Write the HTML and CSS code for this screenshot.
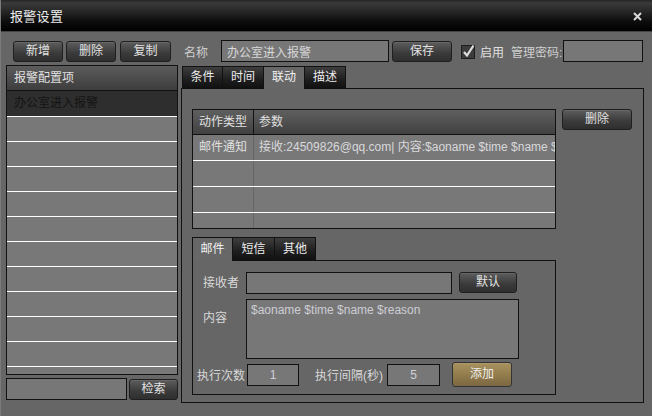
FILE: index.html
```html
<!DOCTYPE html>
<html lang="zh">
<head>
<meta charset="utf-8">
<title>报警设置</title>
<link rel="stylesheet" href="styles.css">
</head>
<body>
<div class="window">
  <div class="titlebar">
    <span class="title">报警设置</span>
    <svg class="close" width="9" height="9" viewBox="0 0 9 9"><path d="M1 1L8 8M8 1L1 8" stroke="#d8d8d8" stroke-width="2"/></svg>
  </div>
  <div class="toolbar">
    <button class="btn w50">新增</button>
    <button class="btn w50 g3">删除</button>
    <button class="btn w51 g4">复制</button>
    <span class="lbl name-lbl">名称</span>
    <input class="field name-field" value="办公室进入报警">
    <button class="btn save">保存</button>
    <span class="check"><svg width="15" height="15" viewBox="0 0 15 15"><rect x="0.5" y="1.5" width="13" height="13" fill="#3c3c3c" stroke="#1c1c1c"/><path d="M3 8L6 11.5L12.5 1.5" fill="none" stroke="#e0e0e0" stroke-width="2.2"/></svg></span>
    <span class="lbl enable">启用</span>
    <span class="lbl pwd-lbl">管理密码:</span>
    <input class="field pwd-field" value="">
  </div>
  <div class="main">
    <div class="left">
      <div class="list">
        <div class="list-head">报警配置项</div>
        <div class="list-row selected">办公室进入报警</div>
        <div class="list-row"></div>
        <div class="list-row"></div>
        <div class="list-row"></div>
        <div class="list-row"></div>
        <div class="list-row"></div>
        <div class="list-row"></div>
        <div class="list-row"></div>
        <div class="list-row"></div>
        <div class="list-row"></div>
        <div class="list-row"></div>
        <div class="list-row"></div>
      </div>
      <div class="search">
        <input class="field search-field" value="">
        <button class="btn search-btn">检索</button>
      </div>
    </div>
    <div class="right">
      <div class="tabs">
        <div class="tab">条件</div>
        <div class="tab">时间</div>
        <div class="tab active">联动</div>
        <div class="tab">描述</div>
      </div>
      <div class="panel">
        <div class="panel-grid">
          <div class="table">
            <div class="thead">
              <div class="c1">动作类型</div>
              <div class="c2">参数</div>
            </div>
            <div class="trow">
              <div class="c1">邮件通知</div>
              <div class="c2">接收:24509826@qq.com| 内容:$aoname $time $name $reason</div>
            </div>
            <div class="trow"><div class="c1"></div><div class="c2"></div></div>
            <div class="trow"><div class="c1"></div><div class="c2"></div></div>
            <div class="trow"><div class="c1"></div><div class="c2"></div></div>
          </div>
          <button class="btn del-btn">删除</button>
          <div class="sub">
            <div class="tabs sub-tabs">
              <div class="tab active">邮件</div>
              <div class="tab">短信</div>
              <div class="tab">其他</div>
            </div>
            <div class="sub-panel">
              <div class="form-row r1">
                <span class="flbl">接收者</span>
                <input class="field recv" value="">
                <button class="btn def-btn">默认</button>
              </div>
              <div class="form-row r2">
                <span class="flbl content-lbl">内容</span>
                <div class="field area">$aoname $time $name $reason</div>
              </div>
              <div class="form-row r3">
                <span class="flbl cnt-lbl">执行次数</span>
                <input class="field num" value="1">
                <span class="flbl int-lbl">执行间隔(秒)</span>
                <input class="field num num2" value="5">
                <button class="btn gold">添加</button>
              </div>
            </div>
          </div>
        </div>
      </div>
    </div>
  </div>
</div>
</body>
</html>
```
FILE: styles.css
```css
* { box-sizing: border-box; }
html, body { margin: 0; padding: 0; }
body {
  width: 652px;
  height: 416px;
  overflow: hidden;
  background: #666;
  font-family: "Liberation Sans", "Noto Sans CJK SC", sans-serif;
  font-size: 12px;
  color: #dcdcdc;
}
.window {
  width: 652px;
  height: 416px;
  background: #666;
  border-left: 1px solid #7a7a7a;
}
.titlebar {
  height: 32px;
  display: flex;
  align-items: center;
  justify-content: space-between;
  padding: 0 10px 0 9px;
  background: linear-gradient(#252525 0, #3a3a3a 3px, #2a2a2a 10px, #0c0c0c 22px, #000 31px);
  border-bottom: 1px solid #444;
}
.title { font-size: 13px; color: #eee; letter-spacing: 0.3px; }
.close { margin-top: 1px; }

.btn {
  font-family: "Liberation Sans", "Noto Sans CJK SC", sans-serif;
  font-size: 12px;
  color: #e2e2e2;
  height: 21px;
  padding: 0;
  border: 1px solid #1f1f1f;
  border-radius: 3px;
  background: linear-gradient(#5d5d5d, #3a3a3a 60%, #2f2f2f);
  box-shadow: inset 0 1px 0 rgba(255,255,255,0.08);
  line-height: 19px;
}
.field {
  font-family: "Liberation Sans", "Noto Sans CJK SC", sans-serif;
  font-size: 12px;
  color: #d0d0d4;
  background: #777;
  border: 1px solid #111;
  height: 22px;
  margin: 0;
  padding: 0 5px;
  outline: none;
}

.toolbar {
  display: flex;
  align-items: center;
  height: 22px;
  margin-top: 8px;
  padding-left: 12px;
}
.w50 { width: 50px; }
.w51 { width: 51px; }
.g3 { margin-left: 3px; }
.g4 { margin-left: 4px; }
.lbl { color: #cfcfcf; white-space: nowrap; }
.name-lbl { margin-left: 13px; width: 24px; }
.name-field { margin-left: 13px; width: 168px; color: #d8d8d8; }
.save { margin-left: 3px; width: 60px; }
.check { margin-left: 9px; width: 15px; height: 15px; display: flex; }
.enable { margin-left: 4px; color: #e0e0e0; }
.pwd-lbl { margin-left: 7px; }
.pwd-field { margin-left: 1px; width: 80px; }

.main {
  display: flex;
  margin-top: 3px;
}
.left {
  margin-left: 5px;
  width: 172px;
}
.list {
  height: 310px;
  border: 1px solid #111;
  background: #787878;
  overflow: hidden;
}
.list-head {
  height: 25px;
  line-height: 24px;
  padding-left: 7px;
  color: #e0e0e0;
  background: linear-gradient(#5c5c5c, #3d3d3d);
  border-bottom: 1px solid #111;
}
.list-row {
  height: 25px;
  border-bottom: 1px solid #fff;
  padding-left: 7px;
  line-height: 24px;
}
.list-row.selected {
  height: 26px;
  background: #2e2e2e;
  color: #141414;
}
.search {
  display: flex;
  align-items: flex-start;
  margin-top: 3px;
}
.search-field { width: 121px; }
.search-btn { margin-left: 2px; margin-top: 1px; width: 50px; }

.right {
  margin-left: 3px;
  width: 463px;
  padding-top: 1px;
}
.tabs {
  display: flex;
  margin-left: 1px;
  height: 22px;
  position: relative;
  z-index: 1;
}
.tab {
  width: 42px;
  margin-right: -1px;
  border: 1px solid #111;
  border-bottom: none;
  background: linear-gradient(#3e3e3e, #1e1e1e 60%, #111);
  color: #ececec;
  text-align: center;
  line-height: 21px;
  font-size: 12px;
}
.tab:first-child { width: 41px; }
.tab.active {
  background: #676767;
  color: #f0f0f0;
  height: 23px;
}
.panel {
  height: 315px;
  border: 1px solid #111;
  padding: 20px 0 0 10px;
}
.panel-grid {
  display: grid;
  grid-template-columns: 364px auto;
  column-gap: 6px;
  align-items: start;
}
.table {
  height: 120px;
  border: 1px solid #111;
  background: #787878;
  overflow: hidden;
}
.thead {
  display: flex;
  height: 25px;
  background: linear-gradient(#5f5f5f, #414141);
  border-bottom: 1px solid #111;
  line-height: 24px;
  color: #e0e0e0;
}
.thead .c1 { border-right: 1px solid #111; }
.c1 { width: 61px; padding-left: 6px; flex: none; }
.c2 { flex: 1; padding-left: 5px; white-space: nowrap; overflow: hidden; }
.trow {
  display: flex;
  height: 26px;
  border-bottom: 1px solid #fff;
  line-height: 25px;
  color: #d8d8dc;
}
.trow .c1 { border-right: 1px solid #666; color: #e0e0e0; }
.del-btn { width: 70px; }
.sub {
  grid-column: 1;
  margin-top: 8px;
}
.sub-tabs { margin-left: 0; height: 23px; }
.sub-tabs .tab { line-height: 22px; }
.sub-tabs .tab:nth-child(2) { width: 43px; }
.sub-tabs .tab.active { height: 24px; }
.sub-panel {
  height: 135px;
  border: 1px solid #111;
  padding-top: 11px;
}
.form-row {
  display: flex;
  align-items: flex-start;
}
.flbl { color: #d8d8d8; white-space: nowrap; }
.r1 .flbl { padding-left: 10px; width: 53px; line-height: 22px; }
.recv { width: 206px; }
.def-btn { margin-left: 7px; width: 58px; }
.r2 { margin-top: 5px; }
.content-lbl { padding-left: 10px; width: 53px; padding-top: 9px; }
.area {
  width: 273px;
  height: 60px;
  padding: 2px 4px;
  line-height: 16px;
  color: #cdcdd4;
}
.r3 { margin-top: 3px; align-items: center; height: 25px; }
.cnt-lbl { padding-left: 4px; width: 54px; }
.num { width: 52px; text-align: center; color: #d0d0d8; }
.int-lbl { margin-left: 16px; width: 72px; }
.num2 { width: 53px; }
.gold {
  margin-left: 12px;
  width: 60px;
  height: 25px;
  line-height: 23px;
  border: 1px solid #333;
  background: linear-gradient(#a8925f, #917b4c 55%, #7b6742);
  color: #eee;
}
```
